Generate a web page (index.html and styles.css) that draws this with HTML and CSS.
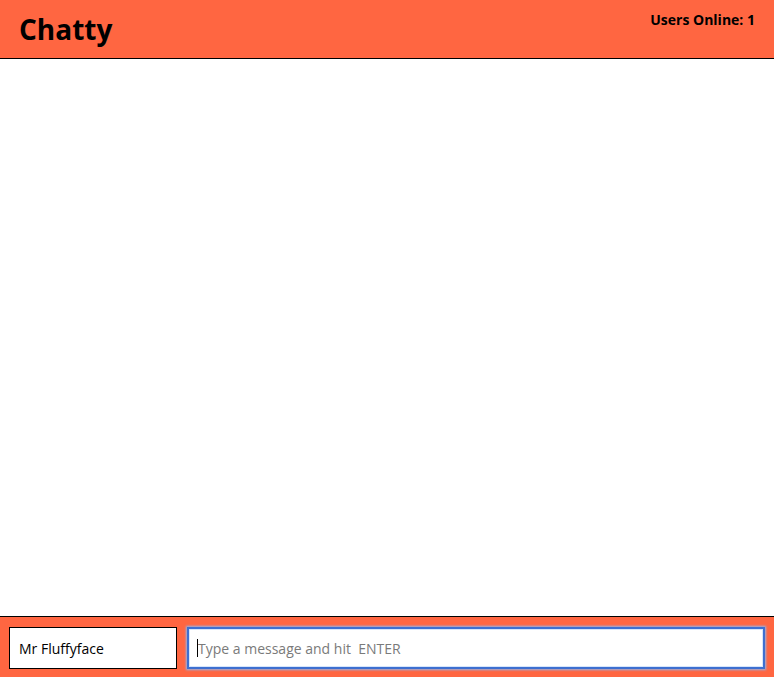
FILE: index.html
```html
<!DOCTYPE html>
<html>
<head>
<meta charset="utf-8">
<link rel="stylesheet" href="styles.css">
</head>
<body>
<div class="app">
  <header class="navbar">
    <h1 class="brand">Chatty</h1>
    <span class="online">Users Online: 1</span>
  </header>
  <main class="messages"></main>
  <footer class="chatbar">
    <input class="username" type="text" value="Mr Fluffyface">
    <div class="message-wrap">
      <span class="caret"></span>
      <input class="message" type="text" placeholder="Type a message and hit  ENTER">
    </div>
  </footer>
</div>
</body>
</html>
```
FILE: styles.css
```css
html, body {
  margin: 0;
  height: 100%;
}
body {
  font-family: "Open Sans", sans-serif;
  background: #fff;
}
.app {
  display: flex;
  flex-direction: column;
  height: 100%;
}
.navbar {
  background: #ff6641;
  border-bottom: 1px solid #000;
  height: 58px;
  display: flex;
  justify-content: space-between;
  align-items: flex-start;
  padding: 0 19px 0 19px;
  flex: none;
}
.brand {
  margin: 0;
  font-size: 28px;
  font-weight: 700;
  line-height: 58px;
  color: #000;
}
.online {
  font-size: 14px;
  font-weight: 700;
  margin-top: 10px;
  color: #000;
}
.messages {
  flex: 1;
}
.chatbar {
  flex: none;
  background: #ff6641;
  border-top: 1px solid #000;
  height: 61px;
  display: flex;
  align-items: flex-start;
  gap: 10px;
  padding: 10px 9px 0;
  box-sizing: border-box;
}
.username {
  width: 168px;
  height: 42px;
  box-sizing: border-box;
  border: 1px solid #000;
  padding: 0 9px;
  font-family: "Open Sans", sans-serif;
  font-size: 14px;
  color: #000;
  background: #fff;
  outline: none;
}
.message-wrap {
  flex: 1;
  position: relative;
  height: 42px;
}
.message {
  width: 100%;
  height: 42px;
  box-sizing: border-box;
  border: 2px solid #3d6fd0;
  box-shadow: 0 0 2px 1px #8fb4ee, inset 0 0 0 1px #d6e6fb;
  padding: 0 9px;
  font-family: "Open Sans", sans-serif;
  font-size: 14px;
  background: #fff;
  outline: none;
}
.message::placeholder {
  color: #7a7a7a;
}
.caret {
  position: absolute;
  left: 10px;
  top: 12px;
  width: 1px;
  height: 18px;
  background: #000;
}
```
